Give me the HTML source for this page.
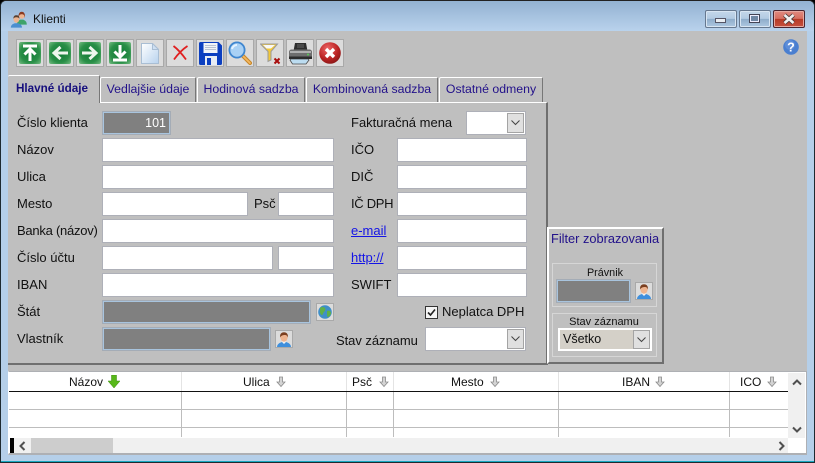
<!DOCTYPE html>
<html><head><meta charset="utf-8"><style>
html,body{margin:0;padding:0;width:815px;height:463px;overflow:hidden;background:#000}
*{box-sizing:border-box}
body{font-family:"Liberation Sans",Arial,sans-serif;font-size:13px;color:#111;position:relative}
div,span,a,svg{position:absolute}
.t{white-space:nowrap;line-height:15px;height:15px}
.i{background:#fff;border:1px solid #aeb0b8}
.d{background:#808080;border:2px solid #a8c4de;outline:1px solid #a4acb6;outline-offset:-1px}
.b{background:#dcdcdc;border:1px solid #a9a9a9;width:28px;height:28px;top:39px}
.sb{background:#dcdcdc;border:1px solid #a9a9a9;width:18px;height:18px}
.tab{top:77px;height:25px;background:#bfbfbf;border:1px solid #fff;border-bottom:0;border-right:1px solid #777;border-radius:2px 2px 0 0;color:#22118a;text-align:center;line-height:23px;white-space:nowrap;font-size:12.3px}
.dd{background:#e0e0e0;border:1px solid #a4a4a4;width:17px}
.col{top:392px;width:1px;height:45px;background:#bdbdbd}
.hc{top:372px;width:1px;height:19px;background:#e4e4e4}
.h{top:375px;height:15px;line-height:15px;color:#111;white-space:nowrap;font-size:12px}
.line{left:9px;width:779px;height:1px;background:#bdbdbd}
</style></head><body>
<svg width="0" height="0" style="left:0;top:0"><defs>
<g id="person"><path d="M1 16c0-3 3-4.500 5-5h4c2 .5 5 2 5 5z" fill="#3f8fdc"/><path d="M6 11l2 2 2-2v-1H6z" fill="#f3f3f3"/><ellipse cx="8" cy="6.500" rx="3.600" ry="4.300" fill="#eeb48f"/><path d="M4.200 6.500C3.500 2.500 6 1.200 8 1.200s4.500 1.300 3.800 5.300c-.6-2-1.500-2.500-3-2.500s-3.900.5-4.600 2.500z" fill="#7b3f1f"/></g>
<radialGradient id="gr" cx=".5" cy=".5" r=".72"><stop offset="0" stop-color="#0f7a34"/><stop offset=".6" stop-color="#2a8f48"/><stop offset="1" stop-color="#7cc088"/></radialGradient>
<radialGradient id="rd" cx=".4" cy=".3" r=".8"><stop offset="0" stop-color="#e66"/><stop offset=".6" stop-color="#b92222"/><stop offset="1" stop-color="#7c1515"/></radialGradient>
<linearGradient id="pg" x1="0" y1="0" x2="1" y2="1"><stop offset="0" stop-color="#fff"/><stop offset="1" stop-color="#b8d2ee"/></linearGradient>
</defs></svg>

<!-- window frame -->
<div style="left:0;top:0;width:815px;height:463px;background:#b5cfe9;border:1px solid #1e2a30;border-top-color:#222;border-radius:6px 6px 0 0"></div>
<div style="left:1px;top:1px;width:813px;height:30px;border-radius:5px 5px 0 0;background:linear-gradient(#93b2d2,#b9d2ec)"></div>
<div style="left:1px;top:455px;width:813px;height:6px;background:#b5cfe9"></div>
<div style="left:1px;top:461px;width:813px;height:1px;background:#18a8c0"></div>

<svg style="left:10px;top:11px" width="18" height="17" viewBox="0 0 18 17"><g transform="translate(6 0) scale(.72)"><path d="M1 19c0-5 3-6 5-7h4c2 1 5 2 5 7z" fill="#3ea36a"/><ellipse cx="8" cy="6" rx="4" ry="4.800" fill="#eeb48f"/><path d="M3.600 10C2.800 3 5.500 1 8 1s5.200 2 4.400 9c-.4-4-1.400-5.500-4.400-5.500S4 6 3.600 10z" fill="#8a3a20"/></g><g transform="translate(0 3) scale(.8)"><path d="M1 17c0-3.500 3-5 5-5.500h4c2 .5 5 2 5 5.500z" fill="#4a8fd0"/><ellipse cx="8" cy="6.500" rx="3.600" ry="4.400" fill="#eeb48f"/><path d="M4.300 6C4 2.500 6 1.500 8 1.500S12 2.500 11.700 6C11 4.500 10 4 8 4S5 4.500 4.300 6z" fill="#5a4030"/></g></svg>
<div class="t" style="left:33px;top:12px;color:#111;font-size:12px">Klienti</div>

<!-- caption buttons -->
<div style="left:705px;top:10px;width:32px;height:18px;border:1px solid #66788f;border-radius:2px;background:linear-gradient(#c4d7ea 0,#b2cae2 48%,#8eacca 50%,#aec8e1 100%);box-shadow:inset 0 0 0 1px #d8e5f2"></div>
<div style="left:715px;top:18px;width:11px;height:5px;background:#e9eef3;border:1px solid #556"></div>
<div style="left:739px;top:10px;width:32px;height:18px;border:1px solid #66788f;border-radius:2px;background:linear-gradient(#c4d7ea 0,#b2cae2 48%,#8eacca 50%,#aec8e1 100%);box-shadow:inset 0 0 0 1px #d8e5f2"></div>
<div style="left:749px;top:14px;width:11px;height:9px;background:#6f87a4;border:1px solid #445;box-shadow:inset 0 0 0 1px #eef"></div>
<div style="left:773px;top:10px;width:32px;height:18px;border:1px solid #4a2530;border-radius:2px;background:linear-gradient(#e08a80 0,#d66e60 48%,#b63a26 50%,#c65140 100%);box-shadow:inset 0 0 0 1px #e5a8a0"></div>
<svg style="left:782px;top:13px" width="14" height="12" viewBox="0 0 14 12"><path d="M2.500 2L11.500 10M11.500 2L2.500 10" stroke="#4a3a3a" stroke-width="4.200"/><path d="M2.500 2L11.500 10M11.500 2L2.500 10" stroke="#f0f0f0" stroke-width="2.600"/></svg>

<!-- client -->
<div style="left:8px;top:31px;width:799px;height:424px;background:#bfbfbf"></div>

<!-- toolbar -->
<div class="b" style="left:16px"></div><div class="b" style="left:46px"></div><div class="b" style="left:76px"></div><div class="b" style="left:106px"></div><div class="b" style="left:136px"></div><div class="b" style="left:166px"></div><div class="b" style="left:196px"></div><div class="b" style="left:226px"></div><div class="b" style="left:256px"></div><div class="b" style="left:286px"></div><div class="b" style="left:316px"></div>

<svg style="left:19px;top:42px" width="22" height="22" viewBox="0 0 22 22"><rect width="22" height="22" rx="2" fill="url(#gr)"/><path d="M4 4h14M11 19V7M5.500 12.500L11 7l5.500 5.500" fill="none" stroke="#fff" stroke-width="3"/></svg>
<svg style="left:49px;top:42px" width="22" height="22" viewBox="0 0 22 22"><rect width="22" height="22" rx="2" fill="url(#gr)"/><path d="M19 11H6M11.500 5L5 11l6.500 6" fill="none" stroke="#eef6ee" stroke-width="3"/></svg>
<svg style="left:79px;top:42px" width="22" height="22" viewBox="0 0 22 22"><rect width="22" height="22" rx="2" fill="url(#gr)"/><path d="M3 11h13M10.500 5l6.500 6-6.500 6" fill="none" stroke="#eef6ee" stroke-width="3"/></svg>
<svg style="left:109px;top:42px" width="22" height="22" viewBox="0 0 22 22"><rect width="22" height="22" rx="2" fill="url(#gr)"/><path d="M4 18h14M11 3v12M5.500 9.500L11 15l5.500-5.500" fill="none" stroke="#fff" stroke-width="3"/></svg>
<svg style="left:141px;top:43px" width="18" height="21" viewBox="0 0 18 21"><path d="M.5.500h11l6 6v14H.5z" fill="url(#pg)" stroke="#a9bed4"/><path d="M11.500.500v6h6z" fill="#cfe0f2" stroke="#a9bed4"/></svg>
<svg style="left:172px;top:45px" width="17" height="15" viewBox="0 0 17 15"><path d="M1.500 1c4 3 8.500 8 12.500 13.500M15.500 1C11 4 6 9 2 14.500" fill="none" stroke="#e02020" stroke-width="1.800"/></svg>
<svg style="left:199px;top:42px" width="23" height="23" viewBox="0 0 23 23"><path d="M0 1.500C0 .6.600 0 1.500 0h18L23 3.500v18c0 .9-.6 1.500-1.500 1.500h-20C.6 23 0 22.400 0 21.500z" fill="#0c3fc0"/><rect x="4.500" y="1" width="14" height="10" fill="#f2f4f8"/><path d="M6 3.500h11M6 5.500h11M6 7.500h11" stroke="#b9c2d2"/><rect x="6" y="14" width="12" height="9" fill="#e8edf5"/><rect x="8" y="16" width="4" height="7" fill="#0c3fc0"/></svg>
<svg style="left:228px;top:41px" width="24" height="24" viewBox="0 0 24 24"><path d="M14.500 14.500L22 22" stroke="#c7872a" stroke-width="4" stroke-linecap="round"/><path d="M15 15l7 7" stroke="#f4b860" stroke-width="1.800" stroke-linecap="round"/><circle cx="9" cy="9" r="7.600" fill="#a9d1f5" stroke="#3f86cf" stroke-width="1.800"/><path d="M4 8a5 5 0 0 1 5-4" fill="none" stroke="#e6f3ff" stroke-width="2"/></svg>
<svg style="left:260px;top:43px" width="22" height="22" viewBox="0 0 22 22"><path d="M.5 1h17L11 8.500V17l-3 1.500v-10z" fill="#f2c83a" stroke="#9a9a9a"/><path d="M3 2h12l-4 3.500H6.500z" fill="#f8f8f8"/><path d="M14.500 15.500l5 5M19.500 15.500l-5 5" stroke="#a80d0d" stroke-width="2"/></svg>
<svg style="left:288px;top:42px" width="25" height="23" viewBox="0 0 25 23"><path d="M7 1h11l1.500 8h-14z" fill="#2e2e2e"/><path d="M9 3h7M9 5h7" stroke="#666"/><path d="M1 10c0-1.500 1-2.500 3-2.500h17c2 0 3 1 3 2.500v7H1z" fill="#6e6e6e"/><path d="M2 9h21v2H2z" fill="#b0b0b0"/><path d="M3 17l-1 1 2.500 4H18l3-4-1-1z" fill="#bcdcf0" stroke="#4a4a4a" stroke-width=".8"/><path d="M1 14.500h23V17H1z" fill="#2c2c2c"/><circle cx="20" cy="12.500" r="1" fill="#5c5"/></svg>
<svg style="left:319px;top:42px" width="22" height="22" viewBox="0 0 22 22"><circle cx="11" cy="11" r="10.800" fill="url(#rd)"/><path d="M7 7l8 8M15 7l-8 8" stroke="#fff" stroke-width="3.400"/></svg>

<!-- help -->
<svg style="left:783px;top:39px" width="16" height="16" viewBox="0 0 16 16"><circle cx="8" cy="8" r="7.800" fill="#4a7fd0"/><circle cx="7" cy="6" r="5" fill="#6f9be0" opacity=".5"/><text x="8" y="12.500" font-family="Liberation Sans" font-weight="bold" font-size="12.500" fill="#fff" text-anchor="middle">?</text></svg>

<!-- tabs -->
<div class="tab" style="left:100px;width:96px">Vedlajšie údaje</div>
<div class="tab" style="left:197px;width:108px">Hodinová sadzba</div>
<div class="tab" style="left:306px;width:132px">Kombinovaná sadzba</div>
<div class="tab" style="left:439px;width:104px">Ostatné odmeny</div>
<div style="left:8px;top:102px;width:540px;height:263px;border-top:1px solid #fff;border-right:2px solid #6f6f6f;border-bottom:2px solid #6f6f6f;background:#bfbfbf"></div>
<div class="tab" style="left:8px;top:75px;width:92px;height:28px;font-weight:bold;border-left:0;color:#17107e;line-height:25px;font-size:11.700px;z-index:2;padding-right:3px">Hlavné údaje</div>

<!-- left labels -->
<div class="t" style="left:17px;top:115px">Číslo klienta</div>
<div class="t" style="left:17px;top:142px">Názov</div>
<div class="t" style="left:17px;top:169px">Ulica</div>
<div class="t" style="left:17px;top:196px">Mesto</div>
<div class="t" style="left:254px;top:196px">Psč</div>
<div class="t" style="left:17px;top:223px;letter-spacing:-.25px">Banka (názov)</div>
<div class="t" style="left:17px;top:250px">Číslo účtu</div>
<div class="t" style="left:17px;top:277px">IBAN</div>
<div class="t" style="left:17px;top:304px">Štát</div>
<div class="t" style="left:17px;top:331px">Vlastník</div>

<div class="d" style="left:102px;top:111px;width:69px;height:24px;color:#fff;text-align:right;padding-right:3px;line-height:21px;font-size:12.500px">101</div>
<div class="i" style="left:102px;top:138px;width:232px;height:24px"></div>
<div class="i" style="left:102px;top:165px;width:232px;height:24px"></div>
<div class="i" style="left:102px;top:192px;width:146px;height:24px"></div>
<div class="i" style="left:278px;top:192px;width:56px;height:24px"></div>
<div class="i" style="left:102px;top:219px;width:232px;height:24px"></div>
<div class="i" style="left:102px;top:246px;width:171px;height:24px"></div>
<div class="i" style="left:278px;top:246px;width:56px;height:24px"></div>
<div class="i" style="left:102px;top:273px;width:232px;height:24px"></div>
<div class="d" style="left:102px;top:300px;width:209px;height:24px"></div>
<div class="sb" style="left:316px;top:303px"></div>
<svg style="left:318px;top:305px" width="14" height="14" viewBox="0 0 14 14"><circle cx="7" cy="7" r="6.800" fill="#3f8fc8"/><path d="M2 3c2-1.500 4-1 5 0s0 3-1 4-1 3-2 3-2-1.500-2-3zM9 6c2-1 4 0 4 2s-2 4-3 4-1-2-1-3z" fill="#5fb04a"/></svg>
<div class="d" style="left:102px;top:327px;width:169px;height:24px"></div>
<div class="sb" style="left:275px;top:330px"></div>
<svg style="left:276px;top:331px" width="16" height="16" viewBox="0 0 16 16"><use href="#person"/></svg>

<!-- right column -->
<div class="t" style="left:351px;top:115px">Fakturačná mena</div>
<div class="t" style="left:351px;top:142px">IČO</div>
<div class="t" style="left:351px;top:169px">DIČ</div>
<div class="t" style="left:351px;top:196px;letter-spacing:-.3px">IČ DPH</div>
<a class="t" style="left:351px;top:223px;color:#1414e6;text-decoration:underline">e-mail</a>
<a class="t" style="left:351px;top:250px;color:#1414e6;text-decoration:underline">http://</a>
<div class="t" style="left:351px;top:277px">SWIFT</div>
<div class="t" style="left:442px;top:304px">Neplatca DPH</div>
<div class="t" style="left:336px;top:333px;letter-spacing:-.05px">Stav záznamu</div>

<div class="i" style="left:466px;top:111px;width:60px;height:24px"></div>
<div class="dd" style="left:507px;top:113px;height:20px"></div>
<svg style="left:511px;top:120px" width="9" height="6" viewBox="0 0 9 6"><path d="M.5.500l4 4 4-4" fill="none" stroke="#444" stroke-width="1"/></svg>
<div class="i" style="left:397px;top:138px;width:130px;height:24px"></div>
<div class="i" style="left:397px;top:165px;width:130px;height:24px"></div>
<div class="i" style="left:397px;top:192px;width:130px;height:24px"></div>
<div class="i" style="left:397px;top:219px;width:130px;height:24px"></div>
<div class="i" style="left:397px;top:246px;width:130px;height:24px"></div>
<div class="i" style="left:397px;top:273px;width:130px;height:24px"></div>
<div style="left:425px;top:306px;width:13px;height:13px;background:#f4f4f4;border:1px solid #333"></div>
<svg style="left:426px;top:307px" width="11" height="11" viewBox="0 0 11 11"><path d="M2 5.500l2.500 2.500L9 2.500" fill="none" stroke="#222" stroke-width="1.600"/></svg>
<div class="i" style="left:425px;top:327px;width:101px;height:24px"></div>
<div class="dd" style="left:507px;top:329px;height:20px"></div>
<svg style="left:511px;top:336px" width="9" height="6" viewBox="0 0 9 6"><path d="M.5.500l4 4 4-4" fill="none" stroke="#444" stroke-width="1"/></svg>

<!-- filter panel -->
<div style="left:547px;top:227px;width:117px;height:137px;background:#bfbfbf;border:2px solid #fff;border-right-color:#6f6f6f;border-bottom-color:#6f6f6f"></div>
<div class="t" style="left:551px;top:231px;color:#22118a;font-size:12.800px">Filter zobrazovania</div>
<div style="left:552px;top:263px;width:105px;height:44px;border:1px solid #d6d6d6"></div>
<div class="t" style="left:552px;top:266px;width:105px;text-align:center;font-size:10.800px;padding-left:1px">Právnik</div>
<div class="d" style="left:556px;top:279px;width:75px;height:24px"></div>
<div class="sb" style="left:635px;top:282px"></div>
<svg style="left:636px;top:283px" width="16" height="16" viewBox="0 0 16 16"><use href="#person"/></svg>
<div style="left:552px;top:313px;width:105px;height:44px;border:1px solid #d6d6d6"></div>
<div class="t" style="left:552px;top:315px;width:105px;text-align:center;font-size:11px;padding-right:1px">Stav záznamu</div>
<div style="left:558px;top:328px;width:94px;height:23px;background:#d4d0c8;border:2px solid #fff"></div>
<div class="t" style="left:563px;top:332px;font-size:12.500px">Všetko</div>
<div class="dd" style="left:633px;top:330px;height:19px"></div>
<svg style="left:637px;top:337px" width="9" height="6" viewBox="0 0 9 6"><path d="M.5.500l4 4 4-4" fill="none" stroke="#444" stroke-width="1"/></svg>

<!-- grid -->
<div style="left:8px;top:371px;width:799px;height:84px;background:#fff;border:1px solid #aeb0b4;border-left-color:#fff;border-bottom-width:2px"></div>
<div style="left:9px;top:391px;width:779px;height:1px;background:#111"></div>
<div class="line" style="top:409px"></div>
<div class="line" style="top:427px"></div>
<div class="col" style="left:181px"></div><div class="col" style="left:346px"></div><div class="col" style="left:393px"></div><div class="col" style="left:558px"></div><div class="col" style="left:729px"></div>
<div class="hc" style="left:181px"></div><div class="hc" style="left:346px"></div><div class="hc" style="left:393px"></div><div class="hc" style="left:558px"></div><div class="hc" style="left:729px"></div>
<div class="h" style="left:69px">Názov</div>
<svg style="left:108px;top:375px" width="12" height="13" viewBox="0 0 12 13"><path d="M3.500 0h5v6H12L6 13 0 6h3.500z" fill="#58b81a" stroke="#3c8a10" stroke-width=".5"/></svg>
<div class="h" style="left:243px">Ulica</div>
<svg style="left:275px;top:376px" width="12" height="12" viewBox="0 0 12 12"><path d="M4.500 1h3v5h2.500L6 10.500 2 6h2.500z" fill="#d4d4d4" stroke="#8c8c8c" stroke-width=".8"/></svg>
<div class="h" style="left:352px">Psč</div>
<svg style="left:378px;top:376px" width="12" height="12" viewBox="0 0 12 12"><path d="M4.500 1h3v5h2.500L6 10.500 2 6h2.500z" fill="#d4d4d4" stroke="#8c8c8c" stroke-width=".8"/></svg>
<div class="h" style="left:451px">Mesto</div>
<svg style="left:489px;top:376px" width="12" height="12" viewBox="0 0 12 12"><path d="M4.500 1h3v5h2.500L6 10.500 2 6h2.500z" fill="#d4d4d4" stroke="#8c8c8c" stroke-width=".8"/></svg>
<div class="h" style="left:622px">IBAN</div>
<svg style="left:654px;top:376px" width="12" height="12" viewBox="0 0 12 12"><path d="M4.500 1h3v5h2.500L6 10.500 2 6h2.500z" fill="#d4d4d4" stroke="#8c8c8c" stroke-width=".8"/></svg>
<div class="h" style="left:740px">ICO</div>
<svg style="left:766px;top:376px" width="12" height="12" viewBox="0 0 12 12"><path d="M4.500 1h3v5h2.500L6 10.500 2 6h2.500z" fill="#d4d4d4" stroke="#8c8c8c" stroke-width=".8"/></svg>

<!-- scrollbars -->
<div style="left:788px;top:373px;width:17px;height:65px;background:#f0f0f0"></div>
<svg style="left:792px;top:379px" width="10" height="7" viewBox="0 0 10 7"><path d="M1 5.500l4-4 4 4" fill="none" stroke="#505050" stroke-width="2"/></svg>
<svg style="left:792px;top:426px" width="10" height="7" viewBox="0 0 10 7"><path d="M1 1.500l4 4 4-4" fill="none" stroke="#505050" stroke-width="2"/></svg>
<div style="left:10px;top:438px;width:778px;height:15px;background:#f0f0f0"></div>
<div style="left:10px;top:438px;width:4px;height:15px;background:#000"></div>
<div style="left:31px;top:438px;width:82px;height:15px;background:#cdcdcd"></div>
<svg style="left:19px;top:441px" width="7" height="10" viewBox="0 0 7 10"><path d="M5.500 1l-4 4 4 4" fill="none" stroke="#505050" stroke-width="2"/></svg>
<svg style="left:778px;top:441px" width="7" height="10" viewBox="0 0 7 10"><path d="M1.500 1l4 4-4 4" fill="none" stroke="#505050" stroke-width="2"/></svg>
</body></html>
